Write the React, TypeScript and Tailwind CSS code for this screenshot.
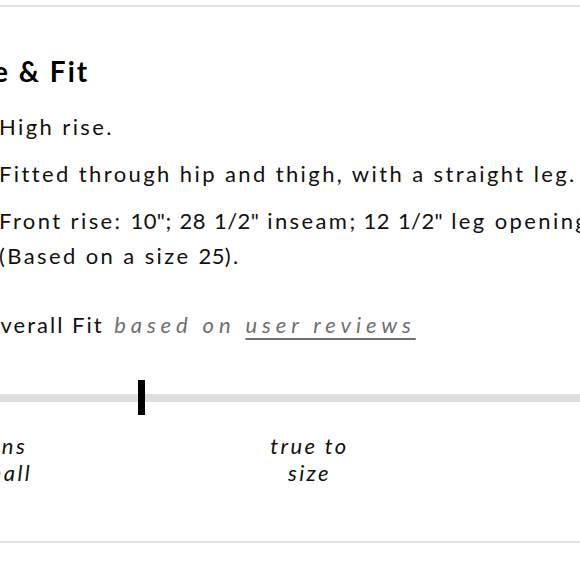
const items = [
  "High rise.",
  "Fitted through hip and thigh, with a straight leg.",
  'Front rise: 10"; 28 1/2" inseam; 12 1/2" leg opening (Based on a size 25).',
];

// digits and inch marks sit tighter than the letters
function Spec({ text }: { text: string }) {
  const parts = text.split(/([0-9/";]+)/);
  return (
    <>
      {parts.map((p, i) =>
        i % 2 === 1 ? (
          <span key={i} className="tracking-[0.4px]">{p}</span>
        ) : (
          <span key={i}>{p}</span>
        )
      )}
    </>
  );
}

function FitScale() {
  return (
    <div className="-ml-[151px] w-[921px]">
      <div className="relative h-[35px] flex items-center">
        <div className="h-[8px] w-full bg-[#dedede]" />
        <div className="absolute left-[289px] top-0 h-[35px] w-[7px] bg-black" />
      </div>
      <div className="mt-[17px] grid grid-cols-3 text-[22px] italic leading-[27px] text-[#111] text-center tracking-[2.4px]">
        <span className="mx-auto w-[92px]">runs small</span>
        <span className="mx-auto w-[92px]">true to size</span>
        <span className="mx-auto w-[92px]">runs large</span>
      </div>
    </div>
  );
}

export default function App() {
  return (
    <div className="w-[580px] h-[580px] overflow-hidden bg-white text-[#111]" style={{ fontFamily: "Lato, 'Open Sans', sans-serif" }}>
      <div className="mt-[5px] w-[1000px] -ml-[48px] border-t-2 border-b-2 border-[#e2e2e2] pt-[47px] pb-[55px]">
        <h2 className="text-[28px] font-bold leading-[34px] tracking-[2px] text-black">Size &amp; Fit</h2>
        <ul className="mt-[21px] pl-[47px] w-[667px] flex flex-col gap-[12px] text-[22px] leading-[35px] tracking-[2.4px]">
          {items.map((t) => (
            <li key={t}>
              <Spec text={t} />
            </li>
          ))}
        </ul>
        <div className="mt-[37px] pl-[29px] text-[22px] leading-[30px] tracking-[2px]">
          Overall Fit{" "}
          <span className="ml-[3px] italic text-[#6f6f6f] tracking-[4.9px]">
            based on <span className="underline underline-offset-[5px] decoration-[1.5px]">user reviews</span>
          </span>
        </div>
        <div className="mt-[40px] pl-[48px]">
          <FitScale />
        </div>
      </div>
    </div>
  );
}
